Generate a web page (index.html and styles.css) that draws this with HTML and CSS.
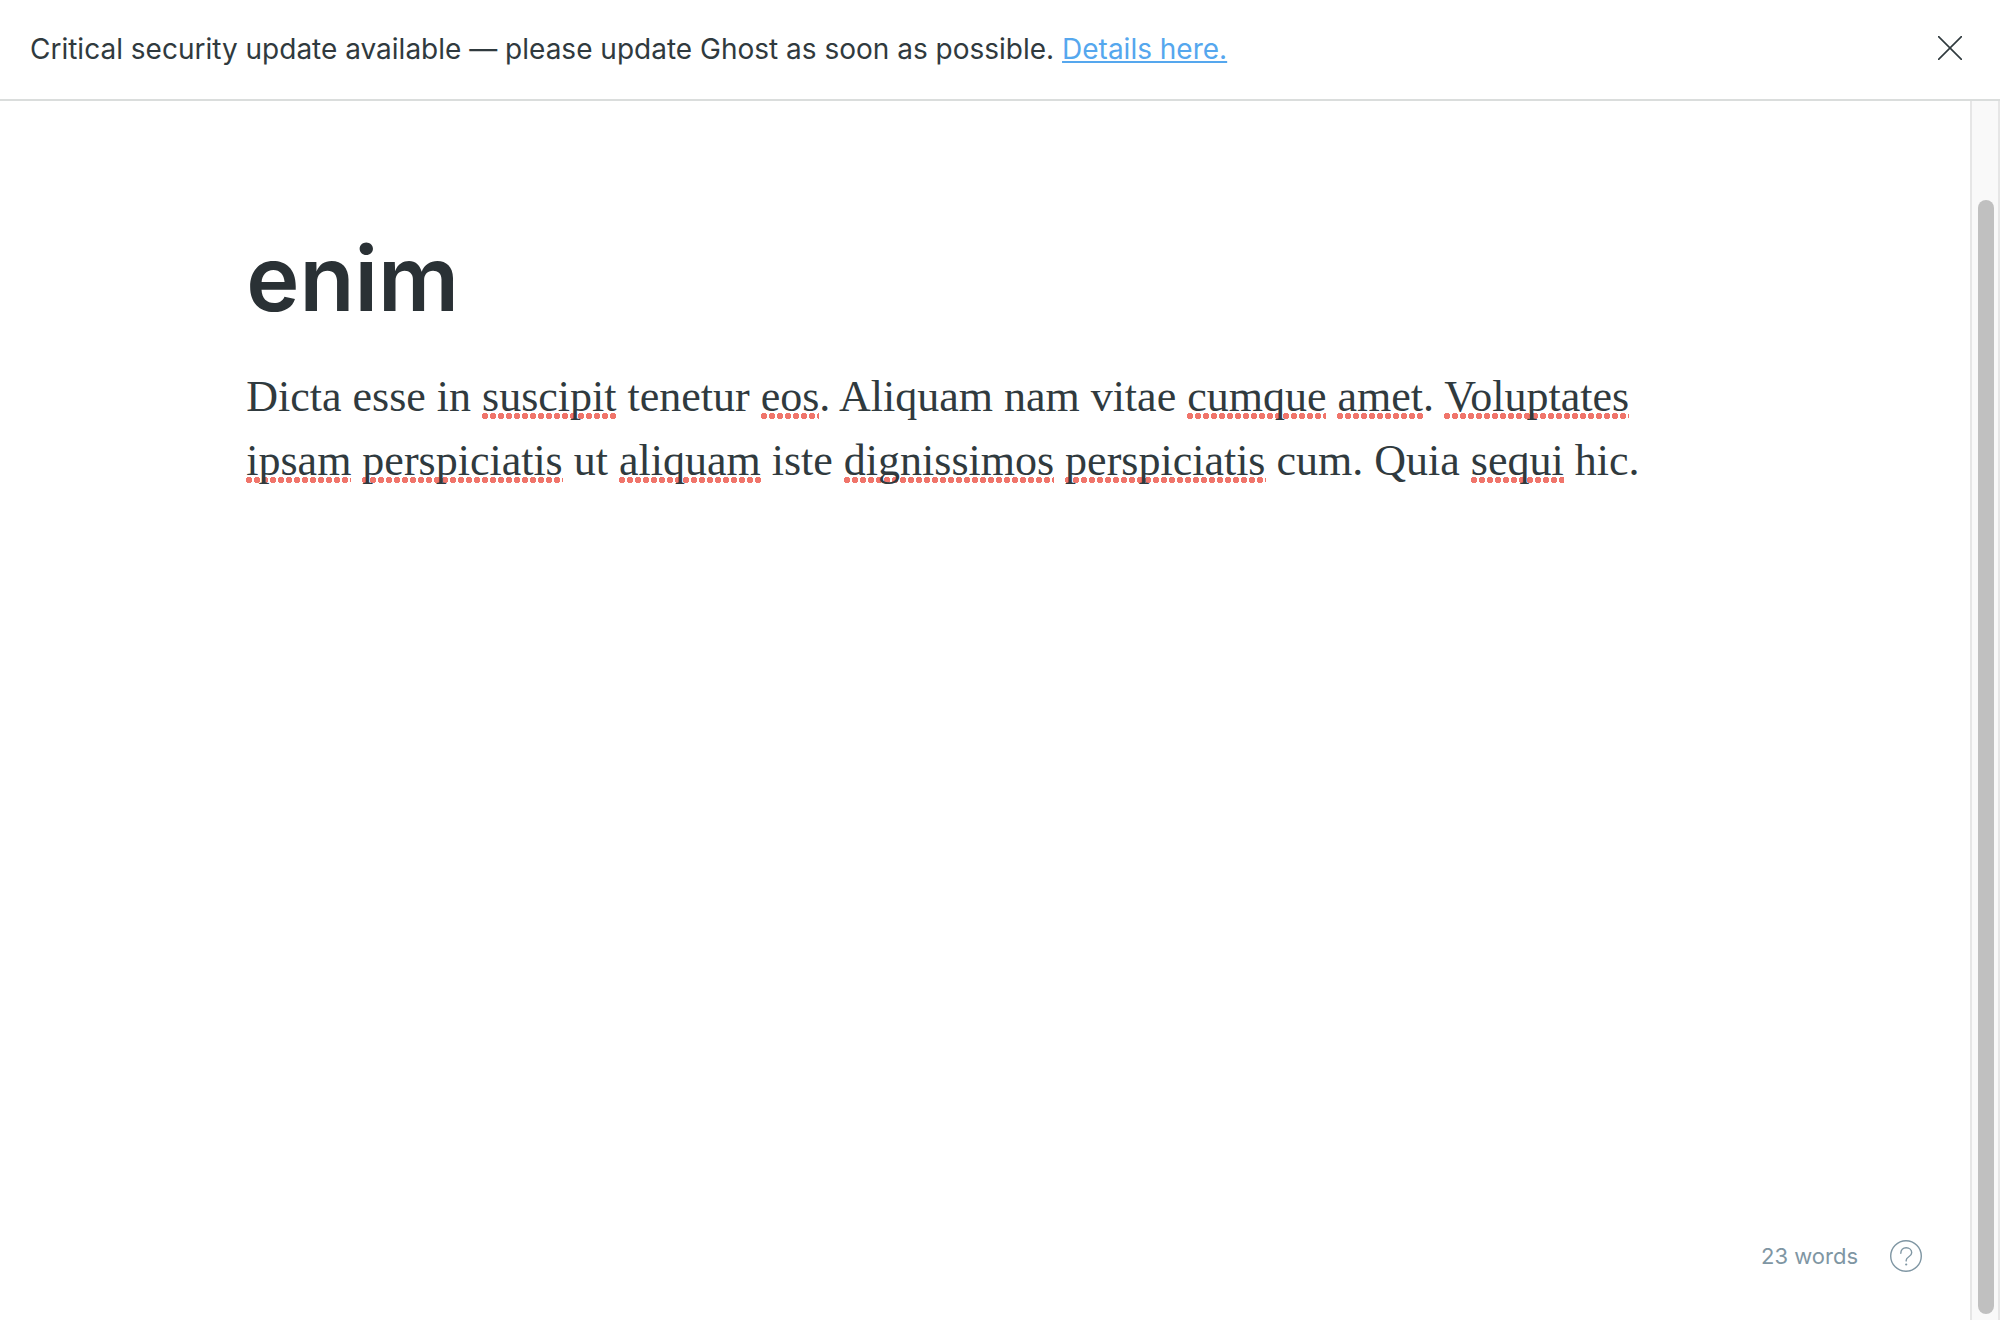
FILE: index.html
```html
<!DOCTYPE html>
<html lang="en">
<head>
<meta charset="utf-8">
<title>enim - Ghost</title>
<link rel="stylesheet" href="styles.css">
</head>
<body>
<div class="app">
  <aside class="alert">
    <p class="alert-text">Critical security update available — please update Ghost as soon as possible. <a class="alert-link" href="#details">Details here.</a></p>
    <button class="icon-button alert-close" type="button" aria-label="Close">
      <svg width="24" height="24" viewBox="0 0 24 24" fill="none" stroke="#303a3e" stroke-width="1.6" stroke-linecap="round"><path d="M.6.6l22.8 22.8M23.4.6L.6 23.4"/></svg>
    </button>
  </aside>
  <div class="workspace">
    <main class="editor">
      <article class="post">
        <h1 class="post-title">enim</h1>
        <p class="post-body">Dicta esse in <span class="misspelt">suscipit</span> tenetur <span class="misspelt">eos</span>. Aliquam nam vitae <span class="misspelt">cumque</span> <span class="misspelt">amet</span>. <span class="misspelt">Voluptates</span> <span class="misspelt">ipsam</span> <span class="misspelt">perspiciatis</span> ut <span class="misspelt">aliquam</span> iste <span class="misspelt">dignissimos</span> <span class="misspelt">perspiciatis</span> cum. Quia <span class="misspelt">sequi</span> hic.</p>
      </article>
      <footer class="status">
        <span>23 words</span>
        <button class="icon-button" type="button" aria-label="Help">
          <svg width="32" height="32" viewBox="0 0 32 32" fill="none" stroke="#7f96a3" stroke-width="1.4" stroke-linecap="round"><circle cx="16" cy="16" r="15.3"/><path d="M10.8 13.2c0-3.2 2.2-5.5 5.4-5.5s5.5 2.2 5.5 5.1c0 4.3-5.5 3.6-5.5 7.4v.7"/><circle cx="16.2" cy="24.5" r="1.1" fill="#7f96a3" stroke="none"/></svg>
        </button>
      </footer>
    </main>
    <div class="scroll-track"><div class="scroll-thumb"></div></div>
  </div>
</div>
</body>
</html>
```
FILE: styles.css
```css
* {
  box-sizing: border-box;
}

body {
  margin: 0;
  background: #fff;
  color: #303a3e;
  font-family: Inter, "Liberation Sans", sans-serif;
}

.app {
  display: flex;
  flex-direction: column;
  min-height: 100vh;
}

.alert {
  display: flex;
  align-items: flex-start;
  justify-content: space-between;
  padding: 32px 38px 32px 30px;
  border-bottom: 2px solid #dadddc;
}

.alert-text {
  margin: 0;
  font-size: 28px;
  line-height: 35px;
}

.alert-link {
  color: #55a7ee;
  text-decoration-thickness: 2px;
  text-underline-offset: 2px;
  text-decoration-skip-ink: none;
}

.icon-button {
  display: flex;
  padding: 0;
  border: 0;
  background: none;
  cursor: pointer;
}

.alert-close {
  padding-top: 4px;
}

.workspace {
  display: flex;
  flex: 1;
}

.editor {
  display: flex;
  flex: 1;
  flex-direction: column;
  justify-content: space-between;
}

.post {
  width: 75%;
  margin: 0 auto;
  padding-top: 124px;
}

.post-title {
  margin: 0;
  color: #2a3135;
  font-size: 90px;
  font-weight: 600;
  line-height: 108px;
}

.post-body {
  margin: 32px 0 0;
  font-family: Georgia, "Liberation Serif", serif;
  font-size: 44px;
  line-height: 64px;
}

/* Row of round dots under words the spell checker flags */
.misspelt {
  background: radial-gradient(circle at 3px 3px, #f0756b 2px, #f0756b 3px, transparent 3px) left bottom 2px / 8px 6px repeat-x;
}

.status {
  display: flex;
  align-items: center;
  justify-content: flex-end;
  gap: 32px;
  padding: 48px;
  color: #7f96a3;
  font-size: 22px;
  line-height: 32px;
}

.scroll-track {
  display: flex;
  width: 30px;
  padding: 99px 4px 6px 6px;
  border: solid #e6e6e6;
  border-width: 0 2px;
  background: #f9f9f9;
}

.scroll-thumb {
  flex: 1;
  border-radius: 8px;
  background: #c0c0c0;
}
```
